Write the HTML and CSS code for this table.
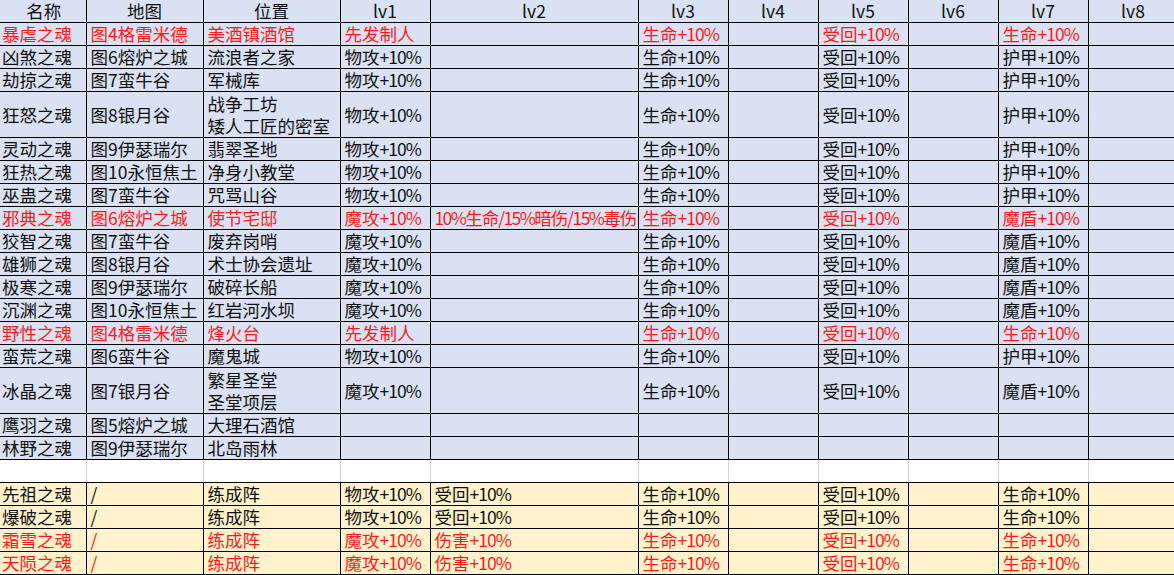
FILE: index.html
```html
<!DOCTYPE html>
<html lang="zh-CN">
<head>
<meta charset="utf-8">
<title>魂</title>
<link rel="stylesheet" href="styles.css">
</head>
<body>
<table class="sheet">
<colgroup>
<col class="c-name"><col class="c-map"><col class="c-loc"><col class="c-lv"><col class="c-lv2"><col class="c-lv"><col class="c-lv"><col class="c-lv"><col class="c-lv"><col class="c-lv"><col class="c-lv">
</colgroup>
<thead>
<tr class="hdr"><th>名称</th><th>地图</th><th>位置</th><th>lv1</th><th>lv2</th><th>lv3</th><th>lv4</th><th>lv5</th><th>lv6</th><th>lv7</th><th>lv8</th></tr>
</thead>
<tbody class="blue">
<tr class="red"><td>暴虐之魂</td><td>图4格雷米德</td><td>美酒镇酒馆</td><td>先发制人</td><td></td><td>生命<span class="n">+10%</span></td><td></td><td>受回<span class="n">+10%</span></td><td></td><td>生命<span class="n">+10%</span></td><td></td></tr>
<tr><td>凶煞之魂</td><td>图6熔炉之城</td><td>流浪者之家</td><td>物攻<span class="n">+10%</span></td><td></td><td>生命<span class="n">+10%</span></td><td></td><td>受回<span class="n">+10%</span></td><td></td><td>护甲<span class="n">+10%</span></td><td></td></tr>
<tr><td>劫掠之魂</td><td>图7蛮牛谷</td><td>军械库</td><td>物攻<span class="n">+10%</span></td><td></td><td>生命<span class="n">+10%</span></td><td></td><td>受回<span class="n">+10%</span></td><td></td><td>护甲<span class="n">+10%</span></td><td></td></tr>
<tr class="tall"><td>狂怒之魂</td><td>图8银月谷</td><td>战争工坊<br>矮人工匠的密室</td><td>物攻<span class="n">+10%</span></td><td></td><td>生命<span class="n">+10%</span></td><td></td><td>受回<span class="n">+10%</span></td><td></td><td>护甲<span class="n">+10%</span></td><td></td></tr>
<tr><td>灵动之魂</td><td>图9伊瑟瑞尔</td><td>翡翠圣地</td><td>物攻<span class="n">+10%</span></td><td></td><td>生命<span class="n">+10%</span></td><td></td><td>受回<span class="n">+10%</span></td><td></td><td>护甲<span class="n">+10%</span></td><td></td></tr>
<tr><td>狂热之魂</td><td>图10永恒焦土</td><td>净身小教堂</td><td>物攻<span class="n">+10%</span></td><td></td><td>生命<span class="n">+10%</span></td><td></td><td>受回<span class="n">+10%</span></td><td></td><td>护甲<span class="n">+10%</span></td><td></td></tr>
<tr><td>巫蛊之魂</td><td>图7蛮牛谷</td><td>咒骂山谷</td><td>物攻<span class="n">+10%</span></td><td></td><td>生命<span class="n">+10%</span></td><td></td><td>受回<span class="n">+10%</span></td><td></td><td>护甲<span class="n">+10%</span></td><td></td></tr>
<tr class="red"><td>邪典之魂</td><td>图6熔炉之城</td><td>使节宅邸</td><td>魔攻<span class="n">+10%</span></td><td class="tight"><span class="n">10%</span>生命<span class="n">/15%</span>暗伤<span class="n">/15%</span>毒伤</td><td>生命<span class="n">+10%</span></td><td></td><td>受回<span class="n">+10%</span></td><td></td><td>魔盾<span class="n">+10%</span></td><td></td></tr>
<tr><td>狡智之魂</td><td>图7蛮牛谷</td><td>废弃岗哨</td><td>魔攻<span class="n">+10%</span></td><td></td><td>生命<span class="n">+10%</span></td><td></td><td>受回<span class="n">+10%</span></td><td></td><td>魔盾<span class="n">+10%</span></td><td></td></tr>
<tr><td>雄狮之魂</td><td>图8银月谷</td><td>术士协会遗址</td><td>魔攻<span class="n">+10%</span></td><td></td><td>生命<span class="n">+10%</span></td><td></td><td>受回<span class="n">+10%</span></td><td></td><td>魔盾<span class="n">+10%</span></td><td></td></tr>
<tr><td>极寒之魂</td><td>图9伊瑟瑞尔</td><td>破碎长船</td><td>魔攻<span class="n">+10%</span></td><td></td><td>生命<span class="n">+10%</span></td><td></td><td>受回<span class="n">+10%</span></td><td></td><td>魔盾<span class="n">+10%</span></td><td></td></tr>
<tr><td>沉渊之魂</td><td>图10永恒焦土</td><td>红岩河水坝</td><td>魔攻<span class="n">+10%</span></td><td></td><td>生命<span class="n">+10%</span></td><td></td><td>受回<span class="n">+10%</span></td><td></td><td>魔盾<span class="n">+10%</span></td><td></td></tr>
<tr class="red"><td>野性之魂</td><td>图4格雷米德</td><td>烽火台</td><td>先发制人</td><td></td><td>生命<span class="n">+10%</span></td><td></td><td>受回<span class="n">+10%</span></td><td></td><td>生命<span class="n">+10%</span></td><td></td></tr>
<tr><td>蛮荒之魂</td><td>图6蛮牛谷</td><td>魔鬼城</td><td>物攻<span class="n">+10%</span></td><td></td><td>生命<span class="n">+10%</span></td><td></td><td>受回<span class="n">+10%</span></td><td></td><td>护甲<span class="n">+10%</span></td><td></td></tr>
<tr class="tall"><td>冰晶之魂</td><td>图7银月谷</td><td>繁星圣堂<br>圣堂项层</td><td>魔攻<span class="n">+10%</span></td><td></td><td>生命<span class="n">+10%</span></td><td></td><td>受回<span class="n">+10%</span></td><td></td><td>魔盾<span class="n">+10%</span></td><td></td></tr>
<tr><td>鹰羽之魂</td><td>图5熔炉之城</td><td>大理石酒馆</td><td></td><td></td><td></td><td></td><td></td><td></td><td></td><td></td></tr>
<tr><td>林野之魂</td><td>图9伊瑟瑞尔</td><td>北岛雨林</td><td></td><td></td><td></td><td></td><td></td><td></td><td></td><td></td></tr>
</tbody>
<tbody class="gap">
<tr><td></td><td></td><td></td><td></td><td></td><td></td><td></td><td></td><td></td><td></td><td></td></tr>
</tbody>
<tbody class="yellow">
<tr><td>先祖之魂</td><td>/</td><td>练成阵</td><td>物攻<span class="n">+10%</span></td><td>受回<span class="n">+10%</span></td><td>生命<span class="n">+10%</span></td><td></td><td>受回<span class="n">+10%</span></td><td></td><td>生命<span class="n">+10%</span></td><td></td></tr>
<tr><td>爆破之魂</td><td>/</td><td>练成阵</td><td>物攻<span class="n">+10%</span></td><td>受回<span class="n">+10%</span></td><td>生命<span class="n">+10%</span></td><td></td><td>受回<span class="n">+10%</span></td><td></td><td>生命<span class="n">+10%</span></td><td></td></tr>
<tr class="red"><td>霜雪之魂</td><td>/</td><td>练成阵</td><td>魔攻<span class="n">+10%</span></td><td>伤害<span class="n">+10%</span></td><td>生命<span class="n">+10%</span></td><td></td><td>受回<span class="n">+10%</span></td><td></td><td>生命<span class="n">+10%</span></td><td></td></tr>
<tr class="red last"><td>天陨之魂</td><td>/</td><td>练成阵</td><td>魔攻<span class="n">+10%</span></td><td>伤害<span class="n">+10%</span></td><td>生命<span class="n">+10%</span></td><td></td><td>受回<span class="n">+10%</span></td><td></td><td>生命<span class="n">+10%</span></td><td></td></tr>
</tbody>
</table>
</body>
</html>
```

FILE: styles.css
```css
html, body {
  margin: 0;
  padding: 0;
  background: #ffffff;
  overflow: hidden;
}

.sheet {
  border-collapse: collapse;
  table-layout: fixed;
  width: 1178px;
  font-family: "Noto Sans CJK SC", "Noto Sans", sans-serif;
  font-size: 17.5px;
  color: #111111;
}

.c-name { width: 86px; }
.c-map { width: 117px; }
.c-loc { width: 137px; }
.c-lv { width: 90px; }
.c-lv2 { width: 208px; }

.sheet th,
.sheet td {
  border: 1px solid #000000;
  padding: 0 0 0 4px;
  white-space: nowrap;
  line-height: 22px;
  vertical-align: middle;
  text-align: left;
}

.sheet th:first-child,
.sheet td:first-child {
  border-left: none;
  padding-left: 2px;
}

.hdr th {
  height: 22px;
  font-weight: normal;
  text-align: center;
  padding: 0;
  border-top: none;
  background: #d9e1f2;
}

.n {
  letter-spacing: -1px;
}

.sheet td.tight {
  letter-spacing: -1px;
  overflow: hidden;
}

.tight .n {
  letter-spacing: -1.6px;
}

.blue tr { height: 23px; }
.blue td { background: #d9e1f2; }
.blue tr.tall { height: 46px; }

.gap tr { height: 23px; }
.gap td {
  background: #ffffff;
  border-left-color: #d4d4d4;
  border-right-color: #d4d4d4;
}

.yellow tr { height: 23px; }
.yellow td { background: #fff2cc; }
.yellow tr.last td { border-bottom: 2px solid #000000; }

.red td { color: #ff1a1a; }
```
